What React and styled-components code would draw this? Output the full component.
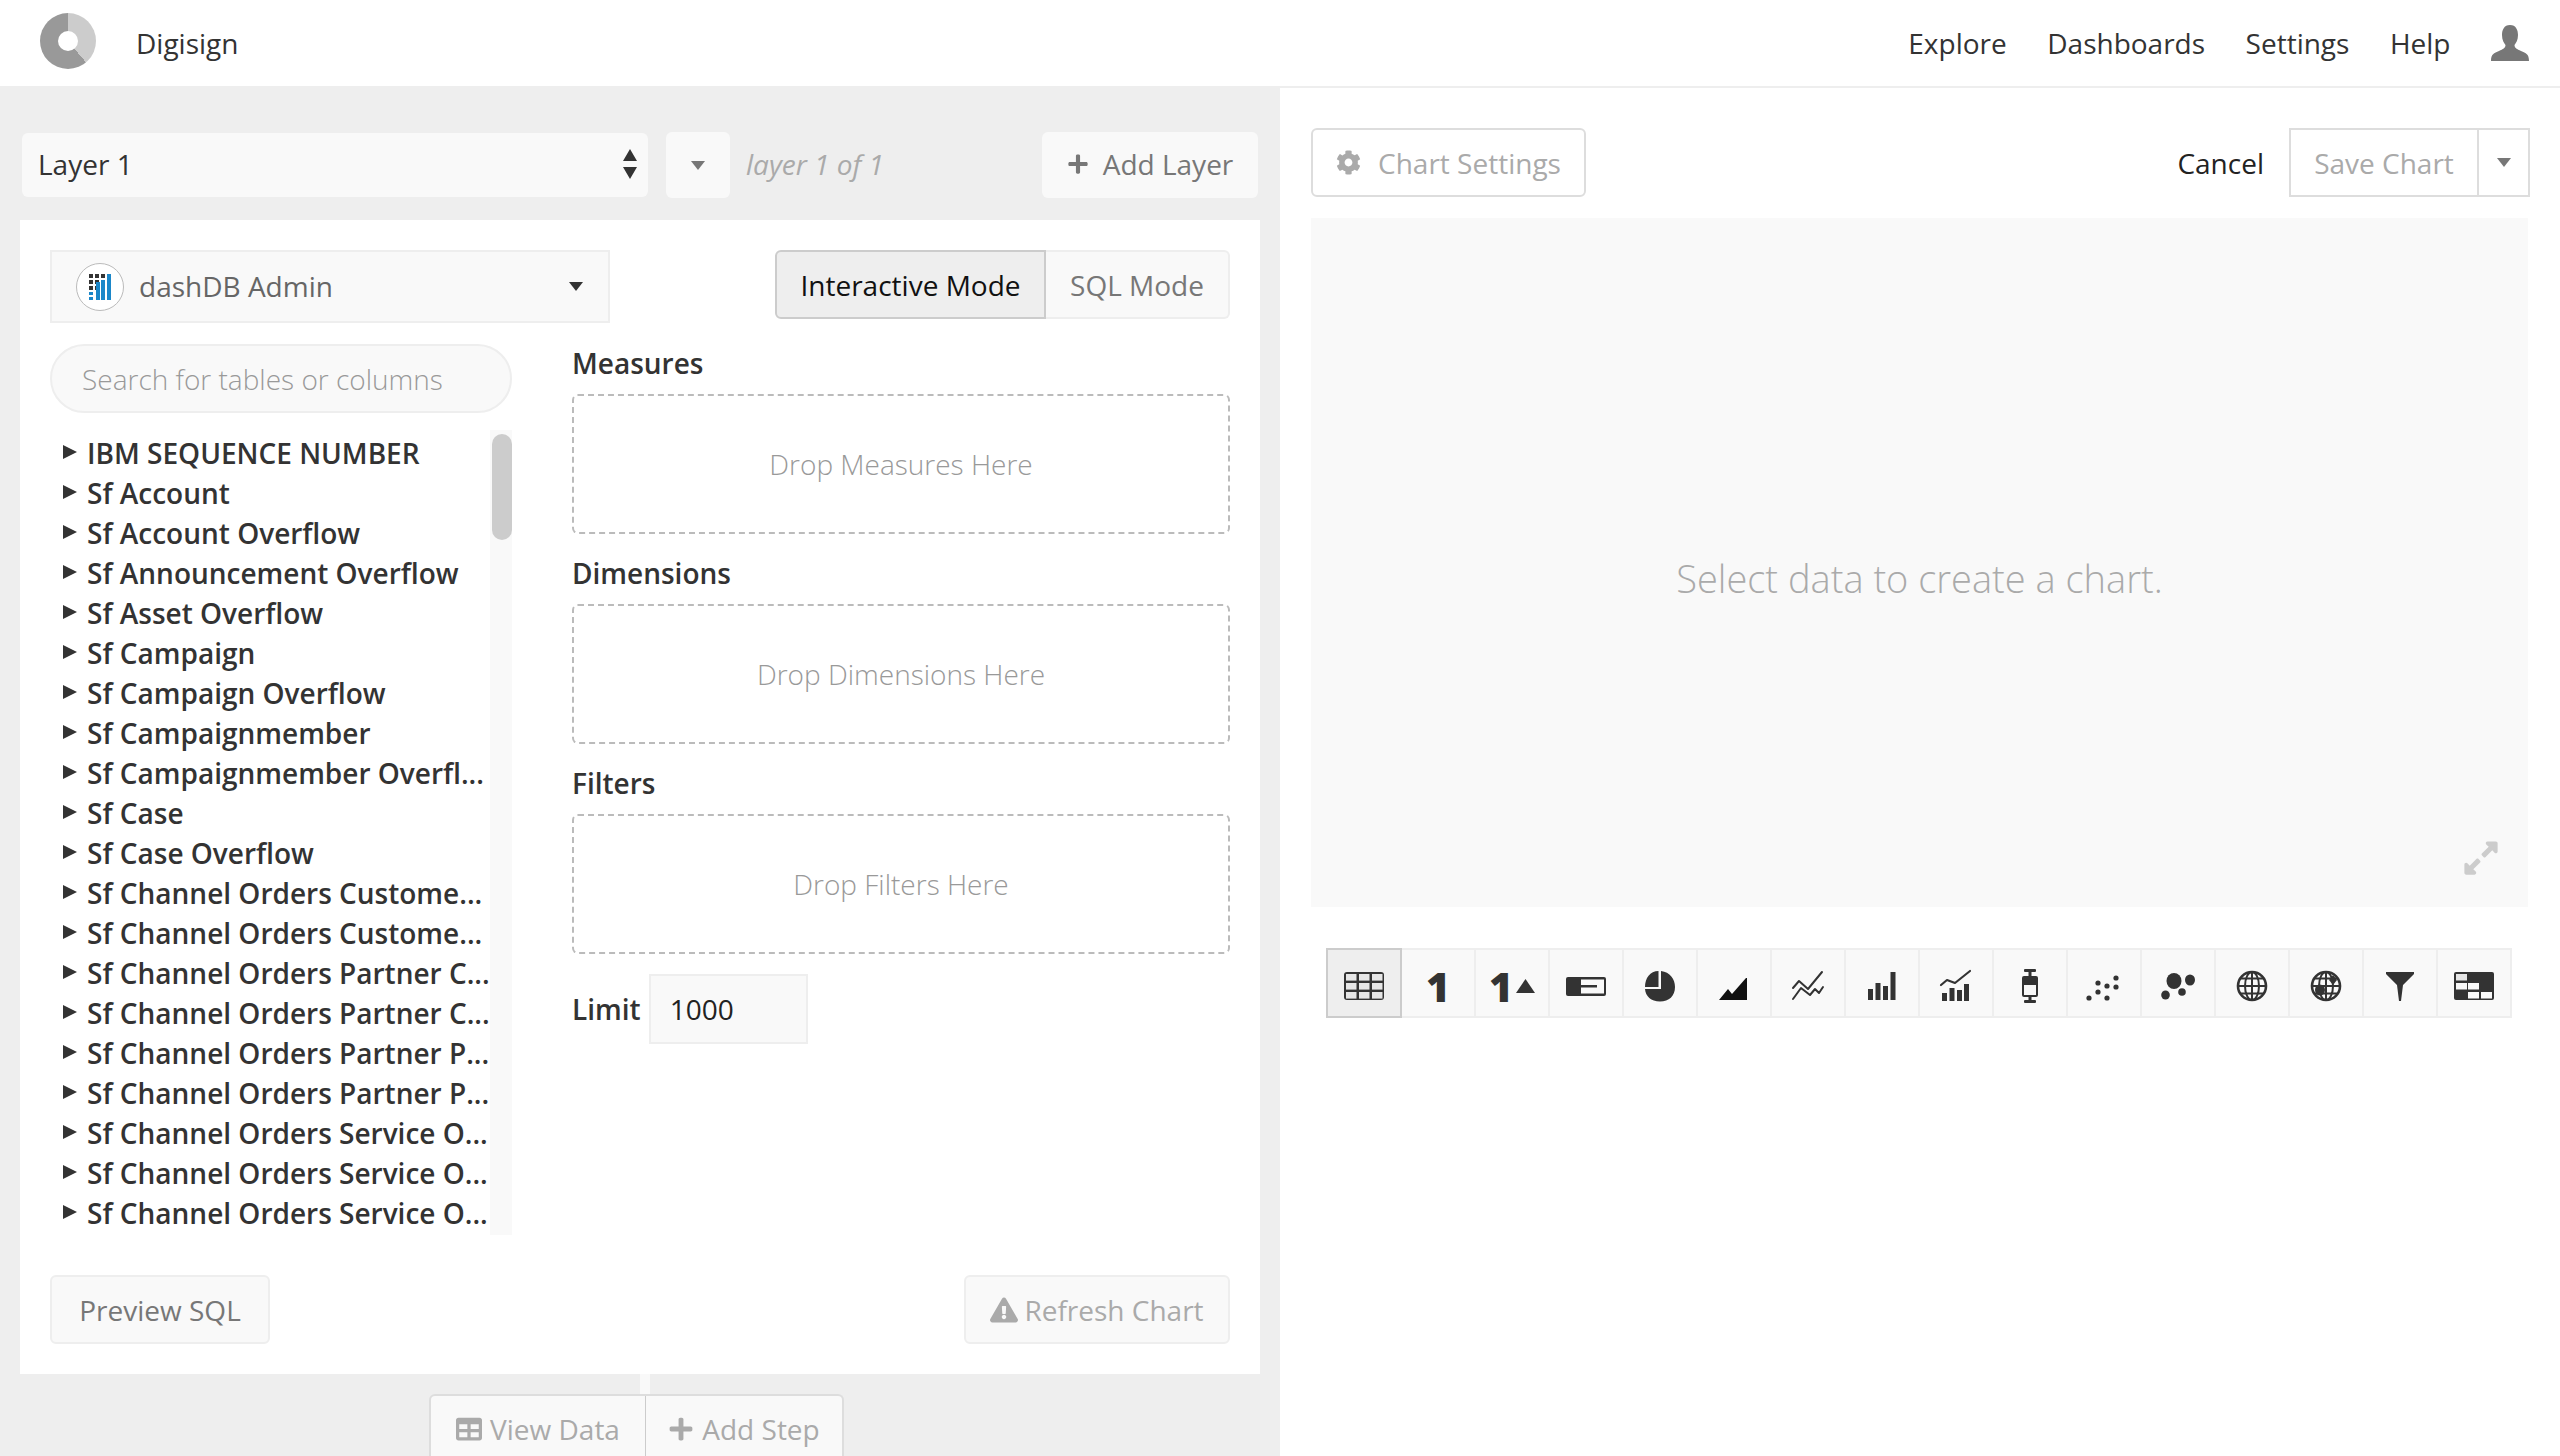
import React from 'react';
import styled, { createGlobalStyle } from 'styled-components';
import { FaCog, FaPlus, FaExclamationTriangle, FaTable, FaExpandAlt } from 'react-icons/fa';

const tables = [
  'IBM SEQUENCE NUMBER',
  'Sf Account',
  'Sf Account Overflow',
  'Sf Announcement Overflow',
  'Sf Asset Overflow',
  'Sf Campaign',
  'Sf Campaign Overflow',
  'Sf Campaignmember',
  'Sf Campaignmember Overfl...',
  'Sf Case',
  'Sf Case Overflow',
  'Sf Channel Orders Custome...',
  'Sf Channel Orders Custome...',
  'Sf Channel Orders Partner C...',
  'Sf Channel Orders Partner C...',
  'Sf Channel Orders Partner P...',
  'Sf Channel Orders Partner P...',
  'Sf Channel Orders Service O...',
  'Sf Channel Orders Service O...',
  'Sf Channel Orders Service O...',
];

const drops = [
  { label: 'Measures', hint: 'Drop Measures Here' },
  { label: 'Dimensions', hint: 'Drop Dimensions Here' },
  { label: 'Filters', hint: 'Drop Filters Here' },
];

const dark = '#333';

const Global = createGlobalStyle`
  html, body {
    margin: 0;
    padding: 0;
    background: #fff;
    font-family: "Open Sans", sans-serif;
    overflow: hidden;
  }
  * { box-sizing: border-box; }
`;

const Page = styled.div`
  width: 2560px;
  height: 1456px;
  overflow: hidden;
  display: flex;
  flex-direction: column;
`;

const Header = styled.header`
  height: 88px;
  flex: none;
  display: flex;
  align-items: center;
  padding: 0 31px 4px 40px;
  border-bottom: 2px solid #eee;
  color: ${dark};
  font-size: 28px;
`;

const Logo = styled.div`
  width: 56px;
  height: 56px;
  border-radius: 50%;
  position: relative;
  background: conic-gradient(#ccc 0 140deg, #999 140deg 360deg);
  &::after {
    content: '';
    position: absolute;
    left: 18px;
    top: 18px;
    width: 20px;
    height: 20px;
    border-radius: 50%;
    background: #fff;
  }
`;

const Brand = styled.div`
  margin-left: 40px;
  flex: 1;
  padding-top: 3px;
`;

const Nav = styled.nav`
  display: flex;
  align-items: center;
  gap: 40.500px;
  padding-top: 3px;
`;

const Main = styled.div`
  flex: 1;
  display: flex;
  min-height: 0;
`;

const LeftPanel = styled.div`
  width: 1280px;
  background: #eee;
  padding: 44px 20px 0;
`;

const LayerBar = styled.div`
  display: flex;
  align-items: center;
  height: 66px;
  margin-bottom: 22px;
  padding-right: 2px;
`;

const LayerSelect = styled.div`
  width: 626px;
  height: 64px;
  margin-left: 2px;
  background: #f9f9f9;
  border-radius: 6px;
  display: flex;
  align-items: center;
  justify-content: space-between;
  padding: 0 11px 3px 16px;
  font-size: 28px;
  color: ${dark};
`;

const Caret = styled.span`
  display: inline-block;
  width: 0;
  height: 0;
  border-left: 7.500px solid transparent;
  border-right: 7.500px solid transparent;
  border-top: 9px solid ${(p) => p.$color || '#333'};
`;

const CaretButton = styled.div`
  width: 64px;
  height: 66px;
  margin-left: 18px;
  background: #f9f9f9;
  border-radius: 6px;
  display: flex;
  align-items: center;
  justify-content: center;
`;

const LayerCount = styled.div`
  margin-left: 16px;
  flex: 1;
  padding-bottom: 2px;
  font-style: italic;
  font-size: 28px;
  color: #aaa;
`;

const AddLayer = styled.div`
  width: 216px;
  height: 66px;
  background: #f9f9f9;
  border-radius: 6px;
  display: flex;
  align-items: center;
  justify-content: center;
  gap: 14px;
  padding-bottom: 2px;
  font-size: 28px;
  color: #777;
  svg { font-size: 22px; }
`;

const Card = styled.div`
  width: 1240px;
  height: 1154px;
  background: #fff;
  padding: 30px;
  display: flex;
  flex-direction: column;
`;

const CardTop = styled.div`
  display: flex;
  justify-content: space-between;
  height: 73px;
  flex: none;
`;

const Source = styled.div`
  width: 560px;
  height: 73px;
  background: #f9f9f9;
  border: 2px solid #eee;
  display: flex;
  align-items: center;
  padding: 0 25px 0 24px;
  font-size: 28px;
  color: #666;
`;

const SourceBadge = styled.div`
  width: 48px;
  height: 48px;
  border-radius: 50%;
  background: #fff;
  border: 1px solid #bbb;
  display: flex;
  align-items: center;
  justify-content: center;
  margin-right: 15px;
`;

const SourceName = styled.div`
  flex: 1;
  padding-bottom: 2px;
`;

const Modes = styled.div`
  display: flex;
  height: 69px;
`;

const Mode = styled.div`
  height: 69px;
  display: flex;
  align-items: center;
  justify-content: center;
  font-size: 28px;
  width: ${(p) => (p.$active ? '271px' : '184px')};
  background: ${(p) => (p.$active ? '#eee' : '#f9f9f9')};
  color: ${(p) => (p.$active ? '#111' : '#777')};
  border: 2px solid ${(p) => (p.$active ? '#ccc' : '#eee')};
  border-left: ${(p) => (p.$active ? '2px solid #ccc' : 'none')};
  border-radius: ${(p) => (p.$active ? '6px 0 0 6px' : '0 6px 6px 0')};
`;

const CardBody = styled.div`
  flex: 1;
  display: flex;
  gap: 60px;
  margin-top: 21px;
  min-height: 0;
`;

const TablesColumn = styled.div`
  width: 462px;
  display: flex;
  flex-direction: column;
`;

const Search = styled.div`
  height: 69px;
  flex: none;
  border-radius: 35px;
  background: #f9f9f9;
  border: 2px solid #eee;
  display: flex;
  align-items: center;
  padding-left: 30px;
  font-size: 28px;
  font-weight: 300;
  color: #999;
`;

const TreeArea = styled.div`
  flex: 1;
  display: flex;
  margin-top: 17px;
  min-height: 0;
  overflow: hidden;
`;

const Tree = styled.ul`
  flex: 1;
  list-style: none;
  margin: 0;
  padding: 3px 0 0 13px;
`;

const TreeRow = styled.li`
  height: 40px;
  display: flex;
  align-items: center;
  gap: 10px;
  font-size: 28px;
  font-weight: 600;
  white-space: nowrap;
  color: ${dark};
`;

const Arrow = styled.span`
  flex: none;
  width: 0;
  height: 0;
  border-top: 7px solid transparent;
  border-bottom: 7px solid transparent;
  border-left: 14px solid ${dark};
  margin-bottom: 2px;
`;

const ScrollTrack = styled.div`
  width: 22px;
  background: #f9f9f9;
  padding: 4px 0 0 2px;
`;

const ScrollThumb = styled.div`
  width: 20px;
  height: 106px;
  border-radius: 10px;
  background: #ccc;
`;

const FieldsColumn = styled.div`
  width: 658px;
  display: flex;
  flex-direction: column;
`;

const FieldLabel = styled.div`
  height: 40px;
  line-height: 38px;
  font-size: 28px;
  font-weight: 600;
  color: ${dark};
  margin-bottom: 10px;
`;

const DropZone = styled.div`
  height: 140px;
  border: 2px dashed #bbb;
  border-radius: 6px;
  display: flex;
  align-items: center;
  justify-content: center;
  font-size: 28px;
  font-weight: 300;
  color: #999;
  margin-bottom: 20px;
`;

const LimitRow = styled.div`
  display: flex;
  align-items: center;
  font-size: 28px;
  font-weight: 600;
  color: ${dark};
`;

const LimitInput = styled.div`
  width: 159px;
  height: 70px;
  margin-left: 8px;
  padding-left: 19px;
  background: #f9f9f9;
  border: 2px solid #eee;
  display: flex;
  align-items: center;
  font-weight: 400;
  color: #222;
`;

const CardFooter = styled.div`
  display: flex;
  justify-content: space-between;
  margin-top: 40px;
  flex: none;
`;

const FooterButton = styled.div`
  height: 69px;
  width: ${(p) => p.$width};
  background: #f9f9f9;
  border: 2px solid #eee;
  border-radius: 6px;
  display: flex;
  align-items: center;
  justify-content: center;
  gap: 6px;
  font-size: 28px;
  color: ${(p) => (p.$muted ? '#aaa' : '#777')};
`;

const Connector = styled.div`
  width: 10px;
  height: 20px;
  margin-left: 620px;
  background: #f9f9f9;
`;

const StepGroup = styled.div`
  display: flex;
  width: 415px;
  height: 62px;
  margin-left: 409px;
  background: #f9f9f9;
  border: 2px solid #ddd;
  border-bottom: none;
  border-radius: 6px 6px 0 0;
`;

const StepButton = styled.div`
  flex: ${(p) => (p.$first ? '0 0 215px' : '1')};
  display: flex;
  align-items: flex-start;
  justify-content: center;
  gap: 8px;
  padding-top: 14px;
  font-size: 28px;
  line-height: 38px;
  color: #aaa;
  border-right: ${(p) => (p.$first ? '1px solid #ccc' : 'none')};
  svg { font-size: 26px; margin-top: 6px; }
`;

const RightPanel = styled.div`
  flex: 1;
  padding: 40px 30px 0 31px;
  background: #fff;
`;

const ChartBar = styled.div`
  display: flex;
  align-items: center;
  height: 69px;
`;

const SettingsButton = styled.div`
  width: 275px;
  height: 69px;
  border: 2px solid #ddd;
  border-radius: 6px;
  display: flex;
  align-items: center;
  justify-content: center;
  gap: 17px;
  font-size: 28px;
  color: #aaa;
  svg { font-size: 25px; }
`;

const Cancel = styled.div`
  margin-left: auto;
  margin-right: 25px;
  font-size: 28px;
  color: #222;
`;

const SaveGroup = styled.div`
  display: flex;
  width: 241px;
  height: 69px;
  border: 2px solid #ddd;
  font-size: 28px;
  color: #aaa;
`;

const SaveLabel = styled.div`
  flex: 1;
  display: flex;
  align-items: center;
  justify-content: center;
  border-right: 2px solid #ddd;
`;

const SaveCaret = styled.div`
  width: 49px;
  display: flex;
  align-items: center;
  justify-content: center;
`;

const ChartArea = styled.div`
  position: relative;
  width: 1217px;
  height: 689px;
  margin-top: 21px;
  background: #f9f9f9;
  display: flex;
  align-items: center;
  justify-content: center;
  padding-top: 30px;
  font-size: 38px;
  font-weight: 300;
  color: #aaa;
`;

const Expand = styled.div`
  position: absolute;
  right: 28px;
  bottom: 30px;
  color: #ccc;
  font-size: 38px;
  line-height: 0;
`;

const ChartTypes = styled.div`
  display: flex;
  width: 1186px;
  margin: 41px 0 0 15px;
`;

const ChartType = styled.div`
  width: ${(p) => (p.$active ? '76px' : '74px')};
  height: 70px;
  flex: none;
  padding-top: 5px;
  display: flex;
  align-items: center;
  justify-content: center;
  background: ${(p) => (p.$active ? '#eee' : '#f9f9f9')};
  border: 2px solid ${(p) => (p.$active ? '#ccc' : '#eee')};
  border-left-width: ${(p) => (p.$active ? '2px' : '0')};
`;

const BigOne = styled.span`
  font-size: 41px;
  font-weight: 800;
  line-height: 36px;
  height: 36px;
  color: ${dark};
`;

const TrendRow = styled.div`
  display: flex;
  align-items: center;
  gap: 3px;
`;

const globeLines = (
  <g fill="none" stroke={dark} strokeWidth="2">
    <circle cx="24" cy="18" r="14" strokeWidth="2.6" />
    <ellipse cx="24" cy="18" rx="7" ry="14" />
    <path d="M24 4 V32 M10 18 H38 M12.500 10.500 H35.500 M12.500 25.500 H35.500" />
  </g>
);

function Glyph({ children }) {
  return <svg width="48" height="36" viewBox="0 0 48 36">{children}</svg>;
}

const chartIcons = [
  // table
  <Glyph key="t">
    <rect x="4" y="4" width="40" height="28" rx="3" fill={dark} />
    {[6, 15, 24].map((y) =>
      [6, 19, 32].map((x) => <rect key={`${x}-${y}`} x={x} y={y} width="10.5" height="6.6" fill="#e6e6e6" />)
    )}
  </Glyph>,
  // single value
  <BigOne key="o">1</BigOne>,
  // single value with trend
  <TrendRow key="ot">
    <BigOne>1</BigOne>
    <svg width="19" height="14" viewBox="0 0 19 14"><path d="M0 14 L9.500 0 L19 14 Z" fill={dark} /></svg>
  </TrendRow>,
  // progress
  <Glyph key="p">
    <rect x="4" y="9" width="40" height="19" rx="2" fill={dark} />
    <rect x="19" y="11.5" width="23" height="14" fill="#f9f9f9" />
    <rect x="19" y="17" width="16" height="2.5" fill={dark} />
  </Glyph>,
  // pie
  <Glyph key="pi">
    <g fill={dark}>
      <path d="M22.500 19 V3 C14 3 9 10 9 19 Z" />
      <path d="M25 3 C34 4 39 11 39 19 C39 28 33 33.500 24 33.500 C15 33.500 9.500 28 9 21 H25 Z" />
    </g>
  </Glyph>,
  // area
  <Glyph key="a">
    <path d="M9 32 L18 21 L22 26 L36 10 H37 V32 Z" fill="#111" />
  </Glyph>,
  // line
  <Glyph key="l">
    <g fill="none" stroke={dark} strokeWidth="2" strokeLinejoin="round" strokeLinecap="round">
      <path d="M9 20 L15 13 L24 21 L38 4" />
      <path d="M9 31 L17 20 L26 27 L31 21 L35 25 L39 19" />
    </g>
  </Glyph>,
  // bars
  <Glyph key="b">
    <g fill={dark}>
      <rect x="10" y="21" width="5" height="11" />
      <rect x="17.500" y="15" width="5" height="17" />
      <rect x="25" y="18" width="5" height="14" />
      <rect x="32.500" y="4" width="5" height="28" />
    </g>
  </Glyph>,
  // combo
  <Glyph key="c">
    <g fill={dark}>
      <rect x="10" y="25" width="5" height="8" />
      <rect x="17.500" y="20" width="5" height="13" />
      <rect x="25" y="22" width="5" height="11" />
      <rect x="32" y="16" width="5" height="17" />
    </g>
    <path d="M9 17 L15 12 L23 15 L38 3" fill="none" stroke={dark} strokeWidth="2.2" strokeLinecap="round" strokeLinejoin="round" />
  </Glyph>,
  // box plot
  <Glyph key="bx">
    <g fill={dark}>
      <rect x="18" y="1" width="12" height="3" rx="1" />
      <rect x="22.5" y="3" width="3" height="6" />
      <rect x="16" y="8" width="16" height="21" rx="2" />
      <rect x="18" y="17" width="12" height="10" fill="#f9f9f9" />
      <rect x="22.5" y="29" width="3" height="4" />
      <rect x="18" y="32" width="12" height="3" rx="1" />
    </g>
  </Glyph>,
  // scatter
  <Glyph key="s">
    <g fill={dark}>
      {[[9, 30], [18, 15], [18, 24], [27, 18], [27, 30], [36, 10], [36, 19]].map(([x, y]) => (
        <circle key={`${x}-${y}`} cx={x} cy={y} r="2.6" />
      ))}
    </g>
  </Glyph>,
  // bubble
  <Glyph key="bu">
    <g fill={dark}>
      <ellipse cx="20" cy="13" rx="7.5" ry="8" />
      <ellipse cx="36" cy="12" rx="5" ry="5.500" />
      <ellipse cx="11.500" cy="27" rx="4.300" ry="4.600" />
      <circle cx="28" cy="24" r="3.800" />
    </g>
  </Glyph>,
  // globe
  <Glyph key="g">{globeLines}</Glyph>,
  // globe with regions
  <Glyph key="gr">
    {globeLines}
    <ellipse cx="18" cy="22" rx="5" ry="5.500" fill={dark} />
    <path d="M31 7 L35 12 L31 17 L27 12 Z" fill={dark} />
  </Glyph>,
  // funnel
  <Glyph key="f">
    <path d="M10 4 H38 V6 L27 17 L25 33 H23 L21 17 L10 6 Z" fill={dark} />
  </Glyph>,
  // heatmap
  <Glyph key="h">
    <rect x="4" y="4" width="40" height="28" rx="2" fill={dark} />
    <rect x="6" y="6" width="11" height="6.500" fill="#e6e6e6" />
    <rect x="6" y="15" width="11" height="6.500" fill="#f9f9f9" />
    <rect x="18" y="15" width="11" height="6.500" fill="#f9f9f9" />
    <rect x="18" y="24" width="11" height="6.500" fill="#f9f9f9" />
    <rect x="31" y="24" width="11" height="6.500" fill="#f9f9f9" />
  </Glyph>,
];

function UserIcon() {
  return (
    <svg width="38" height="36" viewBox="0 0 38 36">
      <path fill="#777" d="M19 0 C25 0 27 5 27 10 C27 15 25 18 23.5 20 C23.5 23 26 24 30 26 C35 28 38 29 38 36 H0 C0 29 3 28 8 26 C12 24 14.500 23 14.500 20 C13 18 11 15 11 10 C11 5 13 0 19 0 Z" />
    </svg>
  );
}

function DashBadge() {
  return (
    <svg width="22" height="26" viewBox="0 0 22 26">
      <g fill="#333">
        {[0, 6, 12].map((x) => [0, 6, 12].map((y) => (x === 12 && y > 0 ? null : <rect key={`${x}${y}`} x={x} y={y} width="4" height="4" />)))}
      </g>
      <g fill="#1b87c9">
        <rect x="0" y="18" width="4" height="3" />
        <rect x="0" y="23" width="4" height="3" />
        <rect x="7" y="8" width="4" height="18" />
        <rect x="12" y="6" width="4" height="20" />
        <rect x="18" y="0" width="4" height="26" />
      </g>
    </svg>
  );
}

function Stepper() {
  return (
    <svg width="14" height="30" viewBox="0 0 14 30">
      <path fill="#333" d="M7 0 L14 12 H0 Z M0 18 H14 L7 30 Z" />
    </svg>
  );
}

export default function App() {
  return (
    <Page>
      <Global />
      <Header>
        <Logo />
        <Brand>Digisign</Brand>
        <Nav>
          <span>Explore</span>
          <span>Dashboards</span>
          <span>Settings</span>
          <span>Help</span>
          <UserIcon />
        </Nav>
      </Header>
      <Main>
        <LeftPanel>
          <LayerBar>
            <LayerSelect>
              Layer 1
              <Stepper />
            </LayerSelect>
            <CaretButton><Caret $color="#777" /></CaretButton>
            <LayerCount>layer 1 of 1</LayerCount>
            <AddLayer><FaPlus />Add Layer</AddLayer>
          </LayerBar>
          <Card>
            <CardTop>
              <Source>
                <SourceBadge><DashBadge /></SourceBadge>
                <SourceName>dashDB Admin</SourceName>
                <Caret />
              </Source>
              <Modes>
                <Mode $active>Interactive Mode</Mode>
                <Mode>SQL Mode</Mode>
              </Modes>
            </CardTop>
            <CardBody>
              <TablesColumn>
                <Search>Search for tables or columns</Search>
                <TreeArea>
                  <Tree>
                    {tables.map((name, i) => (
                      <TreeRow key={i}><Arrow />{name}</TreeRow>
                    ))}
                  </Tree>
                  <ScrollTrack><ScrollThumb /></ScrollTrack>
                </TreeArea>
              </TablesColumn>
              <FieldsColumn>
                {drops.map((d) => (
                  <React.Fragment key={d.label}>
                    <FieldLabel>{d.label}</FieldLabel>
                    <DropZone>{d.hint}</DropZone>
                  </React.Fragment>
                ))}
                <LimitRow>
                  Limit
                  <LimitInput>1000</LimitInput>
                </LimitRow>
              </FieldsColumn>
            </CardBody>
            <CardFooter>
              <FooterButton $width="220px">Preview SQL</FooterButton>
              <FooterButton $width="266px" $muted><FaExclamationTriangle />Refresh Chart</FooterButton>
            </CardFooter>
          </Card>
          <Connector />
          <StepGroup>
            <StepButton $first><FaTable />View Data</StepButton>
            <StepButton><FaPlus />Add Step</StepButton>
          </StepGroup>
        </LeftPanel>
        <RightPanel>
          <ChartBar>
            <SettingsButton><FaCog />Chart Settings</SettingsButton>
            <Cancel>Cancel</Cancel>
            <SaveGroup>
              <SaveLabel>Save Chart</SaveLabel>
              <SaveCaret><Caret $color="#777" /></SaveCaret>
            </SaveGroup>
          </ChartBar>
          <ChartArea>
            <div>Select data to create a chart.</div>
            <Expand><FaExpandAlt /></Expand>
          </ChartArea>
          <ChartTypes>
            {chartIcons.map((icon, i) => (
              <ChartType key={i} $active={i === 0}>{icon}</ChartType>
            ))}
          </ChartTypes>
        </RightPanel>
      </Main>
    </Page>
  );
}
